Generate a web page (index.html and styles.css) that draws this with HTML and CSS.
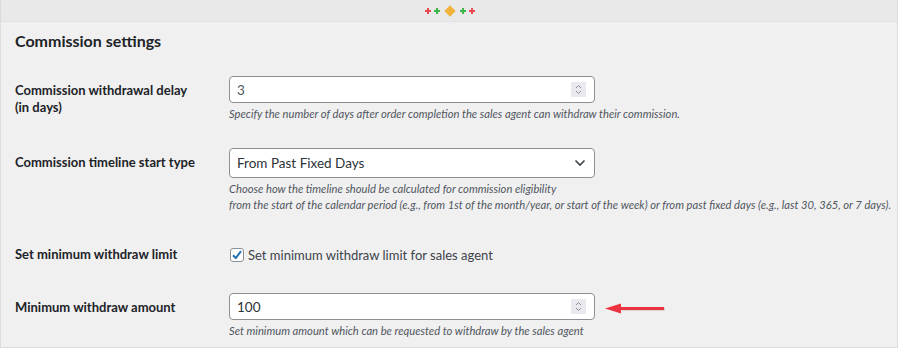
FILE: index.html
```html
<!DOCTYPE html>
<html lang="en">
<head>
  <meta charset="UTF-8"/>
  <title>Commission settings</title>
  <link rel="stylesheet" href="styles.css">
</head>
<body>
  <div class="frame">
    <!-- top strip with the little decoration -->
    <div class="topbar">
      <span class="cross red"></span>
      <span class="cross green"></span>
      <span class="diamond"></span>
      <span class="cross green"></span>
      <span class="cross red"></span>
    </div>

    <div class="content">
      <h2 class="title">Commission settings</h2>

      <div class="row">
        <div class="label">Commission withdrawal delay<br>(in days)</div>
        <div class="field">
          <div class="input">
            <span class="value">3</span>
            <span class="spinner">
              <svg width="15" height="15" viewBox="0 0 15 15"><path d="M5 6 L7.5 3.5 L10 6 M5 9 L7.5 11.5 L10 9" fill="none" stroke="#8c8f94" stroke-width="1"/></svg>
            </span>
          </div>
          <p class="desc">Specify the number of days after order completion the sales agent can withdraw their commission.</p>
        </div>
      </div>

      <div class="row">
        <div class="label label-select">Commission timeline start type</div>
        <div class="field">
          <div class="select">
            <span class="value">From Past Fixed Days</span>
            <svg class="chevron" width="12" height="8" viewBox="0 0 12 8"><path d="M1.5 1.5 L6 6 L10.5 1.5" fill="none" stroke="#3c434a" stroke-width="1.6"/></svg>
          </div>
          <p class="desc">Choose how the timeline should be calculated for commission eligibility<br>from the start of the calendar period (e.g., from 1st of the month/year, or start of the week) or from past fixed days (e.g., last 30, 365, or 7 days).</p>
        </div>
      </div>

      <div class="row row-check">
        <div class="label label-check">Set minimum withdraw limit</div>
        <div class="field">
          <label class="check">
            <span class="box">
              <svg width="14" height="14" viewBox="0 0 14 14"><path d="M3 7.2 L5.8 10 L11 3.2" fill="none" stroke="#2271b1" stroke-width="2"/></svg>
            </span>
            Set minimum withdraw limit for sales agent
          </label>
        </div>
      </div>

      <div class="row">
        <div class="label">Minimum withdraw amount</div>
        <div class="field">
          <div class="input">
            <span class="value dark">100</span>
            <span class="spinner">
              <svg width="15" height="15" viewBox="0 0 15 15"><path d="M5 6 L7.5 3.5 L10 6 M5 9 L7.5 11.5 L10 9" fill="none" stroke="#8c8f94" stroke-width="1"/></svg>
            </span>
            <!-- annotation arrow -->
            <svg class="arrow" width="66" height="16" viewBox="0 0 66 16">
              <path d="M18 6.5 H61 V10 H18 Z" fill="#b9b9b9" opacity="0.5"/>
              <path d="M16 6 H60 V9 H16 Z" fill="#ee3340"/>
              <path d="M1 7.5 L17 2.5 L17 12.5 Z" fill="#ee3340"/>
            </svg>
          </div>
          <p class="desc">Set minimum amount which can be requested to withdraw by the sales agent</p>
        </div>
      </div>
    </div>
  </div>
</body>
</html>
```

FILE: styles.css
```css
body {
  margin: 0;
  background: #f0f0f1;
  font-family: Lato, "Noto Sans", sans-serif;
  color: #1d2327;
}
.frame {
  width: 898px;
  height: 348px;
  box-sizing: border-box;
  border-left: 1px solid #dcdcde;
  border-right: 1px solid #dcdcde;
  border-bottom: 1px solid #dcdcde;
  overflow: hidden;
}
/* TOP STRIP */
.topbar {
  height: 22px;
  background: #e9e9ea;
  border-bottom: 1px solid #e2e2e3;
  box-sizing: border-box;
  display: flex;
  justify-content: center;
  align-items: center;
  gap: 3px;
  padding-left: 1px;
}
.cross {
  width: 6px;
  height: 6px;
  position: relative;
}
.cross::before,
.cross::after {
  content: "";
  position: absolute;
  background: currentColor;
}
.cross::before { left: 2px; top: 0; width: 2px; height: 6px; }
.cross::after { left: 0; top: 2px; width: 6px; height: 2px; }
.cross.red { color: #e84a4f; }
.cross.green { color: #3fb64c; }
.diamond {
  width: 8px;
  height: 8px;
  background: #f0b43c;
  transform: rotate(45deg);
  margin: 0 3px;
}
/* CONTENT */
.content {
  padding: 0 0 0 14px;
}
.title {
  margin: 9px 0 0;
  font-size: 16px;
  line-height: 20px;
  font-weight: 700;
}
.row {
  display: flex;
  padding-top: 25px;
}
.row + .row { padding-top: 26px; }
.row.row-check { padding-top: 32px; }
.row-check + .row { padding-top: 28px; }
.label {
  width: 214px;
  flex-shrink: 0;
  font-size: 13px;
  font-weight: 700;
  line-height: 17px;
  padding-top: 6px;
}
.label-select { padding-top: 6px; }
.label-check { padding-top: 1px; }
.field {
  flex: 1;
}
.input,
.select {
  width: 366px;
  height: 27px;
  box-sizing: border-box;
  border: 1px solid #8c8f94;
  border-radius: 4px;
  background: #fff;
  display: flex;
  align-items: center;
  padding: 0 8px 0 7px;
  position: relative;
  font-size: 13.5px;
  color: #50575e;
}
.select {
  height: 30px;
  padding: 0 7px 0 7px;
  color: #2c3338;
}
.value { flex: 1; }
.value.dark { color: #2c3338; }
.spinner {
  width: 15px;
  height: 15px;
  background: #e9e9ef;
  display: flex;
}
.chevron { margin-right: 1px; }
.desc {
  margin: 3px 0 0;
  font-size: 11.2px;
  line-height: 16px;
  font-style: italic;
  color: #50575e;
}
.check {
  display: flex;
  align-items: center;
  gap: 4px;
  font-size: 13px;
  line-height: 20px;
  color: #3c434a;
}
.box {
  width: 14px;
  height: 14px;
  box-sizing: border-box;
  border: 1px solid #8c8f94;
  border-radius: 3px;
  background: #fff;
  display: flex;
  margin-left: 1px;
}
.box svg { margin: -1px; }
/* arrow drawn over the page, right of the amount input */
.arrow {
  position: absolute;
  left: 374px;
  top: 7px;
}
```
